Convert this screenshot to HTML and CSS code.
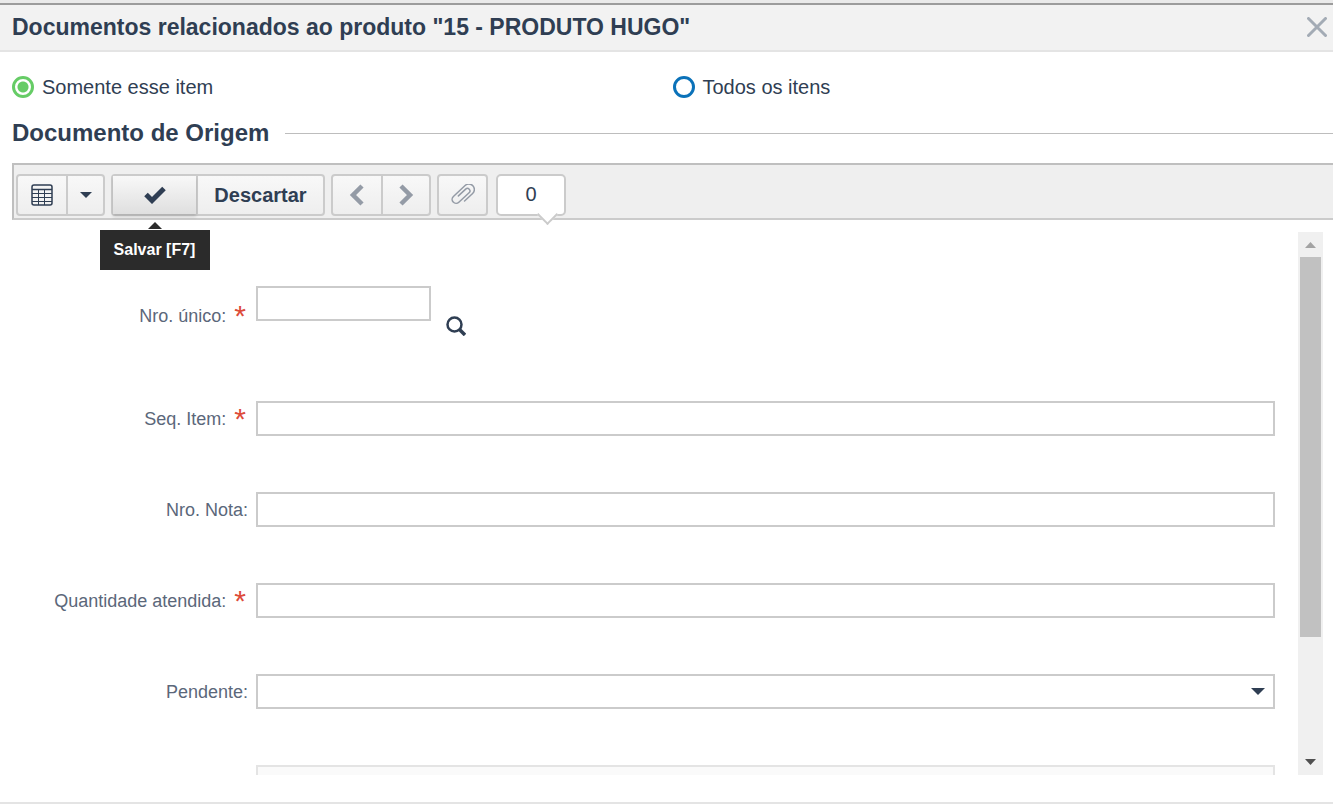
FILE: index.html
```
<!DOCTYPE html>
<html lang="pt-BR">
<head>
  <meta charset="UTF-8">
  <title>Documentos relacionados</title>
  <meta name="viewport" content="width=device-width, initial-scale=1.0">
  <link rel="stylesheet" href="styles.css">
</head>
<body>

  <header class="popup-header">
    <h1>Documentos relacionados ao produto "15 - PRODUTO HUGO"</h1>
    <button class="close-btn" aria-label="Fechar">
      <svg width="20" height="20" viewBox="0 0 20 20"><path d="M1.500 1.500l17 17M18.500 1.500l-17 17" stroke="#a3abb5" stroke-width="3" stroke-linecap="round"/></svg>
    </button>
  </header>

  <div class="scope">
    <label><input type="radio" name="scope" checked> Somente esse item</label>
    <label><input type="radio" name="scope"> Todos os itens</label>
  </div>

  <h2 class="section-title">Documento de Origem</h2>

  <div class="toolbar">
    <div class="btn-group">
      <button class="btn grid-btn" aria-label="Modo grade">
        <svg width="22" height="22" viewBox="0 0 22 22" fill="none" stroke="#2f3e53">
          <rect x="1" y="1" width="20" height="20" rx="2" stroke-width="1.500"/>
          <path d="M1 5.500h20" stroke-width="1.500"/>
          <path d="M1 9.500h20M1 13.500h20M1 17.500h20M7.500 6v15M13.500 6v15" stroke-width="1"/>
        </svg>
      </button>
      <button class="btn drop-btn" aria-label="Mais opções">
        <svg width="12" height="6" viewBox="0 0 12 6"><path d="M0 0h12L6 6z" fill="#2f3e53"/></svg>
      </button>
    </div>
    <div class="btn-group">
      <div class="tip-anchor">
        <button class="btn save-btn" aria-label="Salvar">
          <svg width="22" height="18" viewBox="0 0 22 18"><path d="M2 8.500l6 6L20 2.500" fill="none" stroke="#2f3e53" stroke-width="5"/></svg>
        </button>
        <div class="tooltip" role="tooltip">Salvar [F7]</div>
      </div>
      <button class="btn discard-btn">Descartar</button>
    </div>
    <div class="btn-group">
      <button class="btn nav-btn" aria-label="Anterior">
        <svg width="16" height="22" viewBox="0 0 16 22"><path d="M13 2L4 11l9 9" fill="none" stroke="#949ba6" stroke-width="4.500"/></svg>
      </button>
      <button class="btn nav-btn" aria-label="Próximo">
        <svg width="16" height="22" viewBox="0 0 16 22"><path d="M3 2l9 9-9 9" fill="none" stroke="#949ba6" stroke-width="4.500"/></svg>
      </button>
    </div>
    <div class="btn-group">
      <button class="btn attach-btn" aria-label="Anexos">
        <svg width="24" height="22" viewBox="0 0 24 22" fill="none" stroke="#949ba6" stroke-width="1.500" stroke-linecap="round"><path transform="rotate(-43 12 11) translate(-1 4.500)" d="M10 12H21a5.500 5.500 0 0 0 0-11H5a4 4 0 0 0 0 8H19a2.500 2.500 0 0 0 0-5H9"/></svg>
      </button>
    </div>
    <div class="counter">0</div>
  </div>

  <main class="form-area">
    <form class="form">
      <div class="field field-key">
        <label for="nroUnico">Nro. único: <span class="required">*</span></label>
        <input type="text" id="nroUnico">
        <button type="button" class="search-btn" aria-label="Pesquisar">
          <svg width="20" height="20" viewBox="0 0 20 20" fill="none" stroke="#2f3e53"><circle cx="8.500" cy="8.500" r="7" stroke-width="2.500"/><path d="M13 13l6 6" stroke-width="3.500"/></svg>
        </button>
      </div>
      <div class="field">
        <label for="seqItem">Seq. Item: <span class="required">*</span></label>
        <input type="text" id="seqItem">
      </div>
      <div class="field">
        <label for="nroNota">Nro. Nota:</label>
        <input type="text" id="nroNota">
      </div>
      <div class="field">
        <label for="qtdAtendida">Quantidade atendida: <span class="required">*</span></label>
        <input type="text" id="qtdAtendida">
      </div>
      <div class="field">
        <label for="pendente">Pendente:</label>
        <div class="select-wrap">
          <select id="pendente"><option value=""></option></select>
          <svg class="arrow" width="14" height="7" viewBox="0 0 14 7"><path d="M0 0h14L7 7z" fill="#2f3e53"/></svg>
        </div>
      </div>
      <div class="field">
        <span></span>
        <input type="text" disabled aria-label="Campo desabilitado">
      </div>
    </form>
    <div class="scrollbar">
      <svg width="25" height="25" viewBox="0 0 25 25"><path d="M7 16h11l-5.500-6z" fill="#a3a3a3"/></svg>
      <div class="track"><div class="thumb"></div></div>
      <svg width="25" height="25" viewBox="0 0 25 25"><path d="M7 9h11l-5.500 6z" fill="#505050"/></svg>
    </div>
  </main>

</body>
</html>
```
FILE: styles.css
```
:root {
  --text: #2f3e53;
  --label: #5b677a;
  --border: #cbcbcb;
  --gray: #efefef;
}

* {
  box-sizing: border-box;
}

body {
  font-family: "Liberation Sans", Arial, sans-serif;
  margin: 0;
  height: 100vh;
  display: flex;
  flex-direction: column;
  color: var(--text);
  background: #fff;
  border-top: 3px solid #eaeaea;
  overflow: hidden;
}

button {
  font-family: inherit;
  color: inherit;
  padding: 0;
  border: none;
  background: none;
  cursor: pointer;
}

svg {
  display: block;
}

.popup-header {
  display: flex;
  justify-content: space-between;
  align-items: center;
  height: 49px;
  padding: 0 6px 2px 12px;
  background: #f2f2f2;
  border-top: 2px solid #9c9c9c;
  border-bottom: 2px solid #e4e4e4;
}

h1, h2 {
  font-size: 24px;
  line-height: 28px;
  margin: 0;
}

h1 {
  font-size: 23px;
}

.scope {
  display: grid;
  grid-template-columns: 1fr 1fr;
  padding: 23px 0 20px 12px;
}

.scope label {
  display: flex;
  align-items: center;
  gap: 8px;
  font-size: 20px;
  line-height: 24px;
}

.scope input {
  appearance: none;
  width: 22px;
  height: 22px;
  margin: 0;
  border: 3px solid #0b72b9;
  border-radius: 50%;
}

.scope input:checked {
  border-color: #66cc66;
  background: radial-gradient(circle, #66cc66 5px, #fff 6px);
}

.section-title {
  display: flex;
  align-items: center;
  gap: 16px;
  padding-left: 12px;
}

.section-title::after {
  content: "";
  flex: 1;
  height: 1px;
  background: #bdbdbd;
}

.toolbar {
  display: flex;
  align-items: flex-start;
  gap: 6px;
  height: 57px;
  margin: 16px 0 12px 12px;
  padding: 9px 2px;
  background: var(--gray);
  border: 2px solid #bfbfbf;
  border-right: none;
  border-bottom-color: var(--border);
}

.btn-group {
  display: flex;
  height: 42px;
  background: linear-gradient(#f8f8f8, #eeeeee);
  border: 2px solid var(--border);
  border-radius: 4px;
}

.btn {
  display: flex;
  align-items: center;
  justify-content: center;
  height: 38px;
}

.btn-group > * + * {
  border-left: 2px solid var(--border);
}

.grid-btn {
  width: 48px;
}

.drop-btn {
  width: 37px;
}

.tip-anchor {
  position: relative;
}

.save-btn {
  width: 83px;
  background: linear-gradient(#f8f8f8, #dfdfdf);
  box-shadow: 0 3px 3px rgba(0, 0, 0, 0.12);
}

.discard-btn {
  width: 127px;
  font-size: 20px;
  font-weight: bold;
}

.nav-btn {
  width: 48px;
}

.attach-btn {
  width: 47px;
}

.tooltip {
  position: absolute;
  top: 54px;
  left: 50%;
  transform: translateX(-50%);
  width: 110px;
  background: #2b2b2b;
  color: #fff;
  font-size: 16px;
  font-weight: bold;
  line-height: 40px;
  text-align: center;
  white-space: nowrap;
  z-index: 2;
}

.tooltip::before {
  content: "";
  position: absolute;
  top: -8px;
  left: 48px;
  border: 7px solid transparent;
  border-top: none;
  border-bottom-color: #2b2b2b;
}

.counter {
  position: relative;
  width: 70px;
  height: 42px;
  margin-left: 2px;
  background: #fff;
  border: 2px solid var(--border);
  border-radius: 5px;
  font-size: 20px;
  line-height: 36px;
  text-align: center;
}

.counter::after {
  content: "";
  position: absolute;
  right: 9px;
  bottom: -8px;
  width: 13px;
  height: 13px;
  background: #fff;
  border: solid var(--border);
  border-width: 0 2px 2px 0;
  transform: rotate(45deg);
}

.form-area {
  flex: 1;
  min-height: 0;
  display: flex;
  gap: 23px;
  padding-right: 10px;
  padding-bottom: 27px;
  margin-bottom: 1px;
  border-bottom: 2px solid #e4e4e4;
}

.form {
  flex: 1;
  overflow: hidden;
  padding-top: 54px;
}

.field {
  display: grid;
  grid-template-columns: 248px 1fr;
  column-gap: 8px;
  align-items: center;
  height: 35px;
  margin-bottom: 56px;
}

.field label {
  display: flex;
  justify-content: flex-end;
  align-items: center;
  gap: 8px;
  color: var(--label);
  font-size: 18px;
  line-height: 24px;
}

.required {
  height: 24px;
  padding-right: 2px;
  color: #dd4b39;
  font-size: 30px;
  line-height: 24px;
}

.field input,
.field select {
  width: 100%;
  height: 35px;
  padding: 0 8px;
  background: #fff;
  border: 2px solid var(--border);
  border-radius: 0;
  font-family: inherit;
  font-size: 18px;
  color: var(--text);
}

.field select {
  appearance: none;
}

.field input:disabled {
  background: #fafafa;
  border-color: #e4e4e4;
}

.field-key {
  grid-template-columns: 248px 175px 20px;
  height: 59px;
}

.field-key input {
  align-self: start;
}

.search-btn {
  margin: 20px 0 0 7px;
}

.select-wrap {
  position: relative;
}

.arrow {
  position: absolute;
  top: 14px;
  right: 10px;
  pointer-events: none;
}

.scrollbar {
  display: flex;
  flex-direction: column;
  width: 25px;
  background: #f0f0f0;
}

.track {
  flex: 1;
  padding: 0 2px;
}

.thumb {
  height: 77%;
  background: #c1c1c1;
}
```
